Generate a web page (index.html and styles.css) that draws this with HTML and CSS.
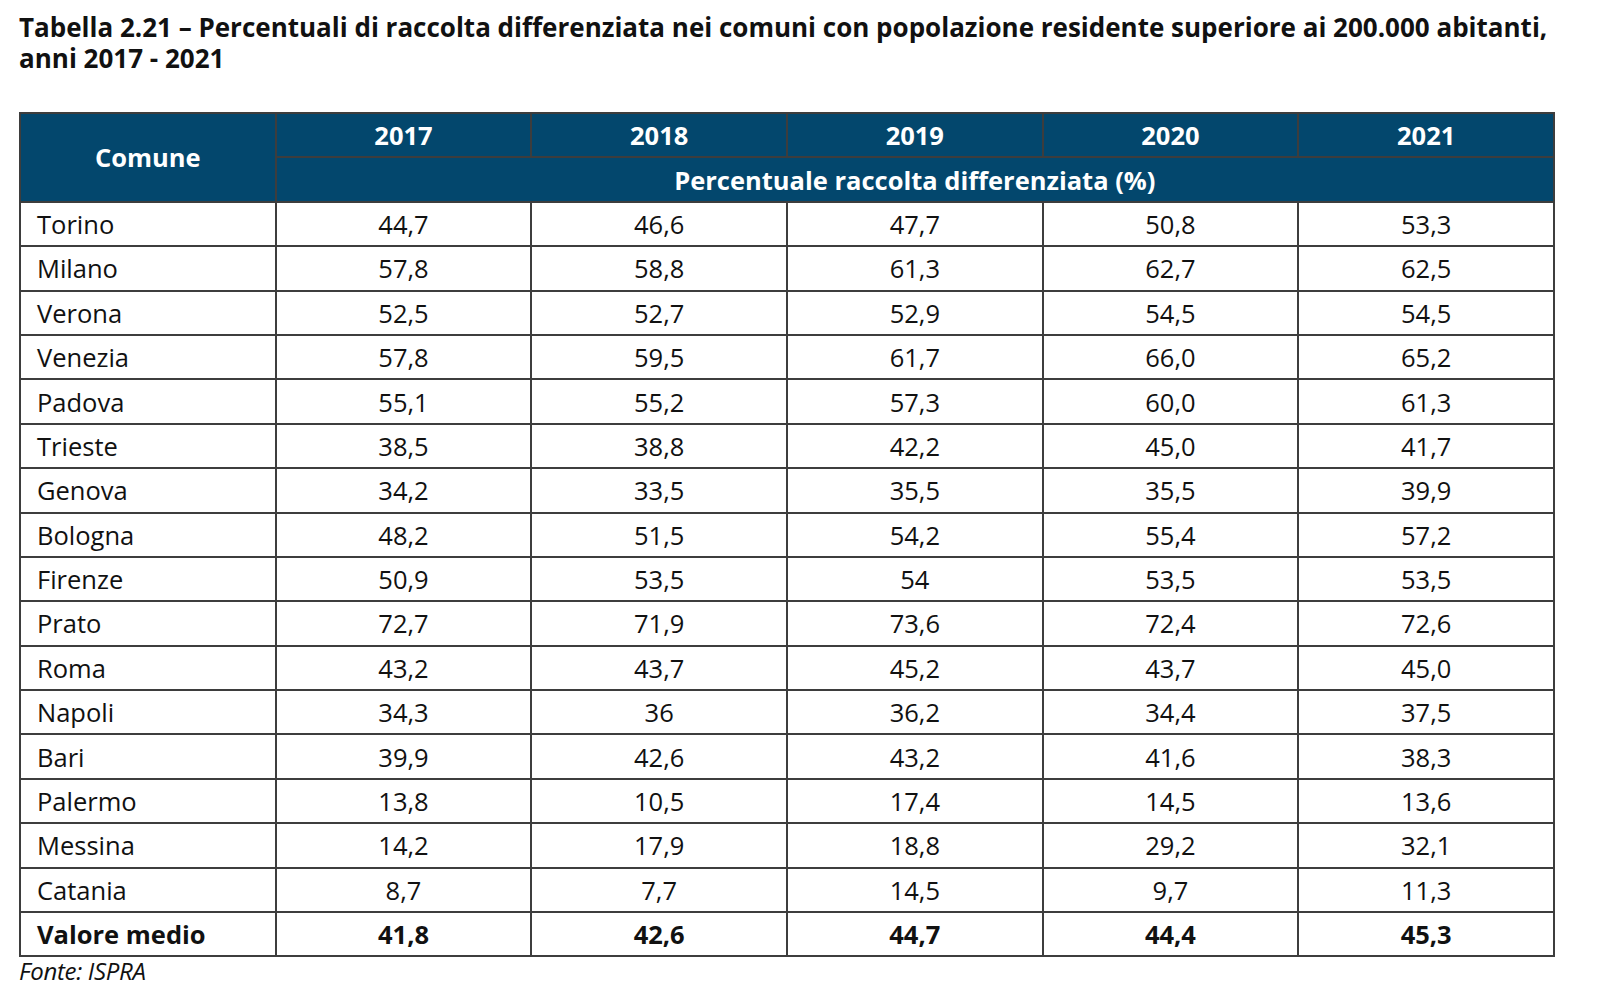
FILE: index.html
```html
<!DOCTYPE html>
<html lang="it">
<head>
<meta charset="utf-8">
<title>Tabella 2.21</title>
<link rel="stylesheet" href="styles.css">
</head>
<body>
<div class="page">
  <h1 class="title">Tabella 2.21 – Percentuali di raccolta differenziata nei comuni con popolazione residente superiore ai 200.000 abitanti, anni 2017 - 2021</h1>
  <table class="data">
    <colgroup>
      <col class="c"><col class="c"><col class="c"><col class="c"><col class="c"><col class="c">
    </colgroup>
    <thead>
      <tr class="hrow">
        <th rowspan="2" class="comune">Comune</th>
        <th>2017</th><th>2018</th><th>2019</th><th>2020</th><th>2021</th>
      </tr>
      <tr class="hrow">
        <th colspan="5">Percentuale raccolta differenziata (%)</th>
      </tr>
    </thead>
    <tbody>
      <tr><td class="name">Torino</td><td>44,7</td><td>46,6</td><td>47,7</td><td>50,8</td><td>53,3</td></tr>
      <tr><td class="name">Milano</td><td>57,8</td><td>58,8</td><td>61,3</td><td>62,7</td><td>62,5</td></tr>
      <tr><td class="name">Verona</td><td>52,5</td><td>52,7</td><td>52,9</td><td>54,5</td><td>54,5</td></tr>
      <tr><td class="name">Venezia</td><td>57,8</td><td>59,5</td><td>61,7</td><td>66,0</td><td>65,2</td></tr>
      <tr><td class="name">Padova</td><td>55,1</td><td>55,2</td><td>57,3</td><td>60,0</td><td>61,3</td></tr>
      <tr><td class="name">Trieste</td><td>38,5</td><td>38,8</td><td>42,2</td><td>45,0</td><td>41,7</td></tr>
      <tr><td class="name">Genova</td><td>34,2</td><td>33,5</td><td>35,5</td><td>35,5</td><td>39,9</td></tr>
      <tr><td class="name">Bologna</td><td>48,2</td><td>51,5</td><td>54,2</td><td>55,4</td><td>57,2</td></tr>
      <tr><td class="name">Firenze</td><td>50,9</td><td>53,5</td><td>54</td><td>53,5</td><td>53,5</td></tr>
      <tr><td class="name">Prato</td><td>72,7</td><td>71,9</td><td>73,6</td><td>72,4</td><td>72,6</td></tr>
      <tr><td class="name">Roma</td><td>43,2</td><td>43,7</td><td>45,2</td><td>43,7</td><td>45,0</td></tr>
      <tr><td class="name">Napoli</td><td>34,3</td><td>36</td><td>36,2</td><td>34,4</td><td>37,5</td></tr>
      <tr><td class="name">Bari</td><td>39,9</td><td>42,6</td><td>43,2</td><td>41,6</td><td>38,3</td></tr>
      <tr><td class="name">Palermo</td><td>13,8</td><td>10,5</td><td>17,4</td><td>14,5</td><td>13,6</td></tr>
      <tr><td class="name">Messina</td><td>14,2</td><td>17,9</td><td>18,8</td><td>29,2</td><td>32,1</td></tr>
      <tr><td class="name">Catania</td><td>8,7</td><td>7,7</td><td>14,5</td><td>9,7</td><td>11,3</td></tr>
      <tr class="total"><td class="name">Valore medio</td><td>41,8</td><td>42,6</td><td>44,7</td><td>44,4</td><td>45,3</td></tr>
    </tbody>
  </table>
  <p class="source">Fonte: ISPRA</p>
</div>
</body>
</html>
```
FILE: styles.css
```css
html, body {
  margin: 0;
  padding: 0;
  background: #ffffff;
}
body {
  font-family: "Open Sans", "Noto Sans", sans-serif;
  color: #111111;
}
.page {
  padding: 12px 40px 0 19px;
}
.title {
  margin: 0;
  font-size: 26px;
  line-height: 31px;
  font-weight: 700;
  letter-spacing: 0;
  color: #111111;
}
.data {
  margin-top: 38px;
  width: 1536px;
  border-collapse: collapse;
  table-layout: fixed;
}
.data th, .data td {
  border: 2px solid #3d3d3d;
  padding: 0;
  height: 42.4px;
  text-align: center;
  font-size: 25.5px;
  letter-spacing: 0;
}
.data th {
  background: #03476d;
  color: #ffffff;
  font-weight: 700;
}
.data td.name {
  text-align: left;
  padding-left: 16px;
}
.data .total td {
  font-weight: 700;
}
.source {
  margin: 0;
  font-style: italic;
  font-size: 24px;
  letter-spacing: -0.3px;
  line-height: 28px;
}
```
